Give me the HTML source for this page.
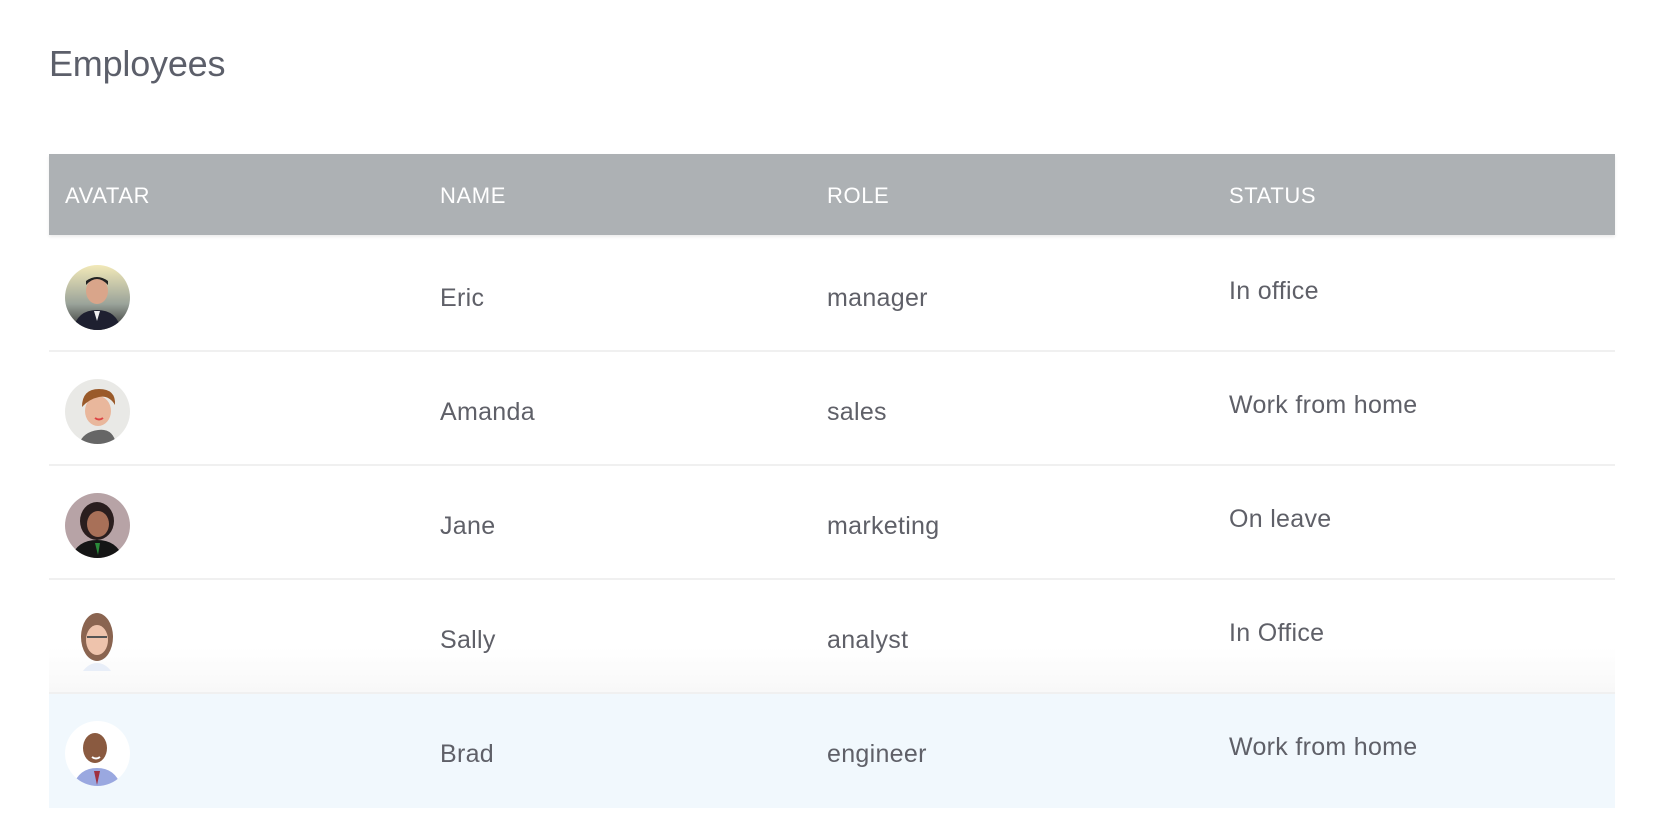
<!DOCTYPE html>
<html><head><meta charset="utf-8"><style>
*{margin:0;padding:0;box-sizing:border-box}
body{width:1656px;height:822px;background:#fff;font-family:"Liberation Sans",sans-serif;color:#5f6068;position:relative;overflow:hidden}
h1{position:absolute;left:49px;top:43px;font-size:36px;font-weight:normal;color:#5c5f6a;letter-spacing:-0.2px}
.hdr{position:absolute;left:49px;top:154px;width:1566px;height:81px;background:#adb1b4;box-shadow:0 2px 3px rgba(0,0,0,.08)}
.hdr span{position:absolute;top:29px;font-size:22px;color:#fff;letter-spacing:0.6px}
.row{position:absolute;left:49px;width:1566px;height:114px;border-bottom:2px solid #f0f0f0}
.row span{position:absolute;font-size:25px;color:#5f6068;letter-spacing:0.3px}
.n{left:391px;top:46px}.r{left:778px;top:46px}.s{left:1180px;top:39px}
.av{position:absolute;left:16px;top:27px;width:65px;height:65px;border-radius:50%;overflow:hidden}
</style></head><body>
<h1>Employees</h1>
<div class="hdr"><span style="left:16px">AVATAR</span><span style="left:391px">NAME</span><span style="left:778px">ROLE</span><span style="left:1180px">STATUS</span></div>

<div class="row" style="top:238px"><div class="av"><svg width="65" height="65"><defs><linearGradient id="g1" x1="0" y1="0" x2="0" y2="1"><stop offset="0" stop-color="#f2e9b8"/><stop offset=".6" stop-color="#9aa39a"/><stop offset="1" stop-color="#333"/></linearGradient></defs><rect width="65" height="65" fill="url(#g1)"/><ellipse cx="32" cy="26" rx="11" ry="13" fill="#d9a58a"/><path d="M21 20q11-12 22 0v-4q-11-8-22 0z" fill="#222"/><path d="M8 65q4-20 24-20t24 20z" fill="#1e2030"/><path d="M29 46l3 10 3-10z" fill="#eee"/></svg></div><span class="n">Eric</span><span class="r">manager</span><span class="s">In office</span></div>

<div class="row" style="top:352px"><div class="av"><svg width="65" height="65"><rect width="65" height="65" fill="#e9e9e6"/><ellipse cx="33" cy="32" rx="13" ry="15" fill="#e9b79c"/><path d="M17 28q0-18 17-18t16 16q-6-10-16-8t-17 10z" fill="#9a5a2a"/><path d="M30 39q4 3 8 0" stroke="#d44" stroke-width="2" fill="none"/><path d="M14 65q4-12 19-14t18 14z" fill="#666"/></svg></div><span class="n">Amanda</span><span class="r">sales</span><span class="s">Work from home</span></div>

<div class="row" style="top:466px"><div class="av"><svg width="65" height="65"><rect width="65" height="65" fill="#b7a3a6"/><ellipse cx="32" cy="28" rx="17" ry="19" fill="#2a1e1e"/><ellipse cx="33" cy="31" rx="11" ry="13" fill="#a87058"/><path d="M6 65q6-18 26-18t26 18z" fill="#151515"/><path d="M30 50l3 12 2-12z" fill="#2a8a3a"/></svg></div><span class="n">Jane</span><span class="r">marketing</span><span class="s">On leave</span></div>

<div class="row" style="top:580px;background:linear-gradient(#fff 60%,#f8f8f8)"><div class="av" style="border-radius:0"><svg width="65" height="65"><ellipse cx="32" cy="30" rx="16" ry="24" fill="#8a6450"/><ellipse cx="32" cy="33" rx="11" ry="15" fill="#eec3ac"/><path d="M22 30h20" stroke="#555" stroke-width="2"/><path d="M18 64q6-8 14-8t14 8z" fill="#e8eef8"/></svg></div><span class="n">Sally</span><span class="r">analyst</span><span class="s">In Office</span></div>

<div class="row" style="top:694px;background:#f1f8fd;border-bottom:none;height:114px"><div class="av"><svg width="65" height="65"><rect width="65" height="65" fill="#fff"/><ellipse cx="30" cy="27" rx="12" ry="15" fill="#8a5a40"/><path d="M27 36q4 3 8 0" stroke="#fff" stroke-width="2" fill="none"/><path d="M8 65q6-18 24-18t24 18z" fill="#9aa8e0"/><path d="M29 50l3 14 3-14z" fill="#a03040"/></svg></div><span class="n">Brad</span><span class="r">engineer</span><span class="s">Work from home</span></div>
</body></html>
